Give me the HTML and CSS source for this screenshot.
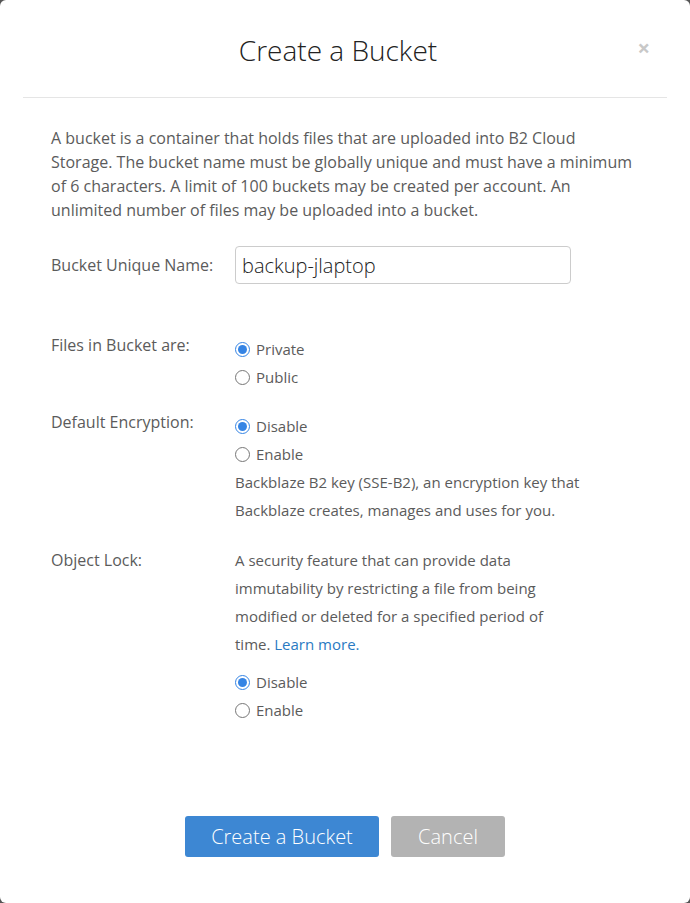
FILE: index.html
```html
<!DOCTYPE html>
<html>
<head>
<meta charset="utf-8">
<link rel="stylesheet" href="styles.css">
</head>
<body>
<div class="modal">
  <div class="modal-header">
    <h2 class="modal-title">Create a Bucket</h2>
    <span class="close">&times;</span>
  </div>
  <div class="modal-body">
    <p class="intro">A bucket is a container that holds files that are uploaded into B2 Cloud Storage. The bucket name must be globally unique and must have a minimum of 6 characters. A limit of 100 buckets may be created per account. An unlimited number of files may be uploaded into a bucket.</p>

    <div class="row row-name">
      <label class="row-label">Bucket Unique Name:</label>
      <input class="text-input" type="text" value="backup-jlaptop">
    </div>

    <div class="row row-files">
      <div class="row-label">Files in Bucket are:</div>
      <div class="options">
        <label class="radio"><input type="radio" name="files" checked> Private</label>
        <label class="radio"><input type="radio" name="files"> Public</label>
      </div>
    </div>

    <div class="row row-enc">
      <div class="row-label">Default Encryption:</div>
      <div class="options">
        <label class="radio"><input type="radio" name="enc" checked> Disable</label>
        <label class="radio"><input type="radio" name="enc"> Enable</label>
        <div class="desc">Backblaze B2 key (SSE-B2), an encryption key that Backblaze creates, manages and uses for you.</div>
      </div>
    </div>

    <div class="row row-lock">
      <div class="row-label">Object Lock:</div>
      <div class="options options-lock">
        <div class="desc desc-lock">A security feature that can provide data immutability by restricting a file from being modified or deleted for a specified period of time. <a href="#" class="link">Learn more.</a></div>
        <div class="lock-radios">
          <label class="radio"><input type="radio" name="lock" checked> Disable</label>
          <label class="radio"><input type="radio" name="lock"> Enable</label>
        </div>
      </div>
    </div>
  </div>
  <div class="modal-footer">
    <button class="btn btn-primary">Create a Bucket</button>
    <button class="btn btn-cancel">Cancel</button>
  </div>
</div>
</body>
</html>
```

FILE: styles.css
```css
html, body {
  margin: 0;
  padding: 0;
}
body {
  background: #555;
  font-family: "Open Sans", "Noto Sans", sans-serif;
  color: #5b5b5b;
}
.modal {
  background: #fff;
  height: 903px;
  border-radius: 6px;
  display: flex;
  flex-direction: column;
  box-sizing: border-box;
}
.modal-header {
  position: relative;
  margin: 0 23px;
  height: 97px;
  border-bottom: 1px solid #e5e5e5;
  display: flex;
  align-items: center;
  justify-content: center;
}
.modal-title {
  margin: 0;
  font-size: 28px;
  font-weight: 300;
  color: #222;
  line-height: 1;
  padding-top: 3px;
  padding-right: 14px;
}
.close {
  position: absolute;
  right: 17px;
  top: 36px;
  font-size: 22px;
  font-weight: 700;
  color: #c8c8c8;
  line-height: 1;
}
.modal-body {
  padding: 28px 48px 0 51px;
}
.intro {
  margin: 0;
  max-width: 585px;
  font-size: 16px;
  line-height: 24px;
}
.row {
  display: flex;
  align-items: flex-start;
}
.row-label {
  width: 184px;
  flex-shrink: 0;
  font-size: 16px;
  line-height: 28px;
}
.row-name {
  margin-top: 24px;
  align-items: center;
}
.text-input {
  width: 336px;
  height: 38px;
  box-sizing: border-box;
  border: 1px solid #ccc;
  border-radius: 4px;
  padding: 0 6px;
  font-family: inherit;
  font-size: 20px;
  font-weight: 300;
  color: #222;
}
.row-files {
  margin-top: 47px;
}
.row-enc {
  margin-top: 17px;
}
.row-lock {
  margin-top: 22px;
}
.options {
  padding-top: 4px;
  display: flex;
  flex-direction: column;
}
.options-lock {
  padding-top: 0;
}
.radio {
  display: flex;
  align-items: center;
  font-size: 15px;
  line-height: 28px;
  height: 28px;
}
.radio input {
  width: 15px;
  height: 15px;
  margin: 0 6px 0 0;
  accent-color: #3584e4;
}
.desc {
  font-size: 15px;
  line-height: 28px;
  width: 350px;
}
.desc-lock {
  width: 340px;
}
.link {
  color: #2a7ac2;
  text-decoration: none;
}
.lock-radios {
  margin-top: 10px;
  display: flex;
  flex-direction: column;
}
.modal-footer {
  margin-top: auto;
  padding-bottom: 46px;
  display: flex;
  justify-content: center;
  gap: 12px;
}
.btn {
  height: 41px;
  border: none;
  border-radius: 3px;
  color: #fff;
  font-family: inherit;
  font-size: 20px;
  font-weight: 300;
  padding: 0;
}
.btn-primary {
  width: 194px;
  background: #3d87d3;
}
.btn-cancel {
  width: 114px;
  background: #b3b3b3;
}
```
